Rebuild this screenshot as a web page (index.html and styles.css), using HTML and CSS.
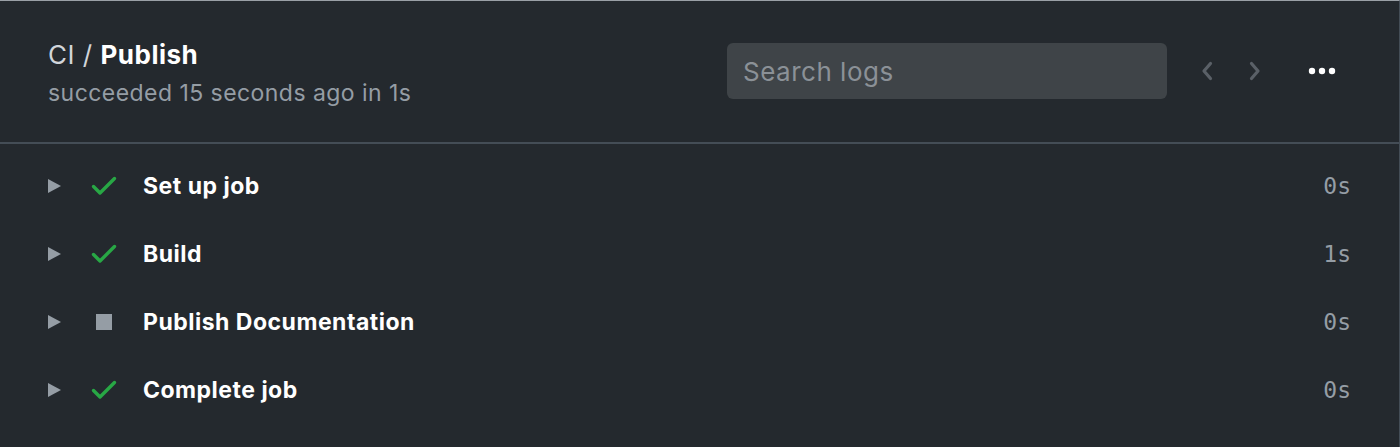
FILE: index.html
```html
<!DOCTYPE html>
<html>
<head>
<meta charset="utf-8">
<link rel="stylesheet" href="styles.css">
</head>
<body>
<div class="panel">
  <header class="head">
    <div class="titles">
      <div class="title"><span class="wf">CI / </span><strong>Publish</strong></div>
      <div class="sub">succeeded 15 seconds ago in 1s</div>
    </div>
    <div class="tools">
      <div class="search">Search logs</div>
      <button class="nav" aria-label="previous">
        <svg width="16" height="24" viewBox="0 0 16 24"><path d="M11.5 4.5 L5 12 L11.5 19.5" fill="none" stroke="#5a6067" stroke-width="3.2" stroke-linecap="round" stroke-linejoin="round"/></svg>
      </button>
      <button class="nav" aria-label="next">
        <svg width="16" height="24" viewBox="0 0 16 24"><path d="M4.5 4.5 L11 12 L4.5 19.5" fill="none" stroke="#5a6067" stroke-width="3.2" stroke-linecap="round" stroke-linejoin="round"/></svg>
      </button>
      <button class="more" aria-label="more">
        <svg width="28" height="8" viewBox="0 0 28 8"><circle cx="4" cy="4" r="3.2" fill="#fff"/><circle cx="14" cy="4" r="3.2" fill="#fff"/><circle cx="24" cy="4" r="3.2" fill="#fff"/></svg>
      </button>
    </div>
  </header>
  <ul class="steps">
    <li class="step">
      <span class="tri"></span>
      <span class="icon"><svg width="26" height="20" viewBox="0 0 26 20"><path d="M2.5 10.5 L9 17 L23.5 2.5" fill="none" stroke="#28a745" stroke-width="3.4" stroke-linecap="round" stroke-linejoin="round"/></svg></span>
      <span class="name">Set up job</span>
      <span class="dur">0s</span>
    </li>
    <li class="step">
      <span class="tri"></span>
      <span class="icon"><svg width="26" height="20" viewBox="0 0 26 20"><path d="M2.5 10.5 L9 17 L23.5 2.5" fill="none" stroke="#28a745" stroke-width="3.4" stroke-linecap="round" stroke-linejoin="round"/></svg></span>
      <span class="name">Build</span>
      <span class="dur">1s</span>
    </li>
    <li class="step">
      <span class="tri"></span>
      <span class="icon"><span class="sq"></span></span>
      <span class="name">Publish Documentation</span>
      <span class="dur">0s</span>
    </li>
    <li class="step">
      <span class="tri"></span>
      <span class="icon"><svg width="26" height="20" viewBox="0 0 26 20"><path d="M2.5 10.5 L9 17 L23.5 2.5" fill="none" stroke="#28a745" stroke-width="3.4" stroke-linecap="round" stroke-linejoin="round"/></svg></span>
      <span class="name">Complete job</span>
      <span class="dur">0s</span>
    </li>
  </ul>
</div>
</body>
</html>
```

FILE: styles.css
```css
* { box-sizing: border-box; }
html, body {
  margin: 0;
  padding: 0;
  background: #24292e;
}
body {
  font-family: Inter, "Liberation Sans", sans-serif;
  color: #fff;
}
.panel {
  width: 1400px;
  height: 447px;
  background: #24292e;
  border-top: 1px solid #9aa0a6;
  border-right: 1px solid #444d56;
}
.head {
  height: 143px;
  display: flex;
  justify-content: space-between;
  align-items: flex-start;
  padding: 37px 63px 0 48px;
  border-bottom: 2px solid #444d56;
}
.titles {
  display: flex;
  flex-direction: column;
}
.title {
  font-size: 26px;
  line-height: 34px;
  color: #fff;
  letter-spacing: 0.5px;
}
.title .wf {
  color: #d1d5da;
  font-weight: 400;
}
.title strong {
  font-weight: 700;
}
.sub {
  margin-top: 7px;
  font-size: 23px;
  line-height: 28px;
  color: #959da5;
  letter-spacing: 0.45px;
}
.tools {
  display: flex;
  align-items: center;
  margin-top: 5px;
}
.search {
  width: 440px;
  height: 56px;
  border-radius: 6px;
  background: #3f4448;
  padding: 0 16px;
  display: flex;
  align-items: center;
  font-size: 26px;
  color: #8b9197;
  letter-spacing: 0.5px;
}
.nav, .more {
  background: none;
  border: 0;
  padding: 0;
  display: flex;
  align-items: center;
  justify-content: center;
}
.nav {
  width: 16px;
  height: 24px;
}
.nav:first-of-type { margin-left: 32px; }
.nav + .nav { margin-left: 32px; }
.more {
  margin-left: 45px;
  width: 28px;
  height: 8px;
}
.steps {
  list-style: none;
  margin: 0;
  padding: 8px 0 0 0;
}
.step {
  height: 68px;
  display: flex;
  align-items: center;
  padding: 0 48px 0 48px;
}
.tri {
  width: 0;
  height: 0;
  border-top: 7px solid transparent;
  border-bottom: 7px solid transparent;
  border-left: 13px solid #959da5;
  margin-right: 29px;
}
.icon {
  width: 28px;
  height: 24px;
  display: flex;
  align-items: center;
  justify-content: center;
  margin-right: 25px;
}
.sq {
  width: 16px;
  height: 16px;
  background: #959da5;
}
.name {
  font-size: 23px;
  font-weight: 700;
  color: #fff;
  flex: 1;
  letter-spacing: 0.5px;
}
.dur {
  font-family: "DejaVu Sans Mono", "Liberation Mono", monospace;
  font-size: 23px;
  color: #959da5;
}
```
